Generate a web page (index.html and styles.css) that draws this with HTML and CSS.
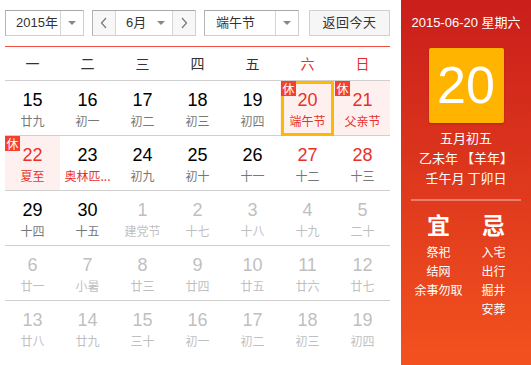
FILE: index.html
```html
<!DOCTYPE html>
<html lang="zh">
<head>
<meta charset="utf-8">
<link rel="stylesheet" href="styles.css">
</head>
<body>
<div class="app">
  <div class="cal">
    <div class="toolbar">
      <div class="sel year"><span class="val">2015年</span><span class="arr"><i></i></span></div>
      <div class="sel month">
        <span class="nav"><svg width="8" height="12" viewBox="0 0 8 12"><polyline points="6,1 1.5,6 6,11" fill="none" stroke="#777" stroke-width="1.2"/></svg></span>
        <span class="val mid">6月<i></i></span>
        <span class="nav"><svg width="8" height="12" viewBox="0 0 8 12"><polyline points="2,1 6.5,6 2,11" fill="none" stroke="#777" stroke-width="1.2"/></svg></span>
      </div>
      <div class="sel fest"><span class="val">端午节</span><span class="arr"><i></i></span></div>
      <div class="btn">返回今天</div>
    </div>
    <div class="week">
      <span>一</span><span>二</span><span>三</span><span>四</span><span>五</span><span class="we">六</span><span class="we">日</span>
    </div>
    <div class="grid">
      <div class="cell"><b>15</b><em>廿九</em></div>
      <div class="cell"><b>16</b><em>初一</em></div>
      <div class="cell"><b>17</b><em>初二</em></div>
      <div class="cell"><b>18</b><em>初三</em></div>
      <div class="cell"><b>19</b><em>初四</em></div>
      <div class="cell hol sel-day"><span class="badge">休</span><b>20</b><em>端午节</em></div>
      <div class="cell hol"><span class="badge">休</span><b>21</b><em>父亲节</em></div>

      <div class="cell hol"><span class="badge">休</span><b>22</b><em>夏至</em></div>
      <div class="cell fest-day"><b>23</b><em>奥林匹...</em></div>
      <div class="cell"><b>24</b><em>初九</em></div>
      <div class="cell"><b>25</b><em>初十</em></div>
      <div class="cell"><b>26</b><em>十一</em></div>
      <div class="cell wkd"><b>27</b><em>十二</em></div>
      <div class="cell wkd"><b>28</b><em>十三</em></div>

      <div class="cell"><b>29</b><em>十四</em></div>
      <div class="cell"><b>30</b><em>十五</em></div>
      <div class="cell other"><b>1</b><em>建党节</em></div>
      <div class="cell other"><b>2</b><em>十七</em></div>
      <div class="cell other"><b>3</b><em>十八</em></div>
      <div class="cell other"><b>4</b><em>十九</em></div>
      <div class="cell other"><b>5</b><em>二十</em></div>

      <div class="cell other"><b>6</b><em>廿一</em></div>
      <div class="cell other"><b>7</b><em>小暑</em></div>
      <div class="cell other"><b>8</b><em>廿三</em></div>
      <div class="cell other"><b>9</b><em>廿四</em></div>
      <div class="cell other"><b>10</b><em>廿五</em></div>
      <div class="cell other"><b>11</b><em>廿六</em></div>
      <div class="cell other"><b>12</b><em>廿七</em></div>

      <div class="cell other last"><b>13</b><em>廿八</em></div>
      <div class="cell other last"><b>14</b><em>廿九</em></div>
      <div class="cell other last"><b>15</b><em>三十</em></div>
      <div class="cell other last"><b>16</b><em>初一</em></div>
      <div class="cell other last"><b>17</b><em>初二</em></div>
      <div class="cell other last"><b>18</b><em>初三</em></div>
      <div class="cell other last"><b>19</b><em>初四</em></div>
    </div>
  </div>
  <div class="side">
    <div class="date">2015-06-20 星期六</div>
    <div class="big">20</div>
    <div class="lunar">
      <div>五月初五</div>
      <div>乙未年 【羊年】</div>
      <div>壬午月 丁卯日</div>
    </div>
    <div class="divider"></div>
    <div class="yj">
      <div class="col">
        <div class="h">宜</div>
        <div class="it">祭祀</div>
        <div class="it">结网</div>
        <div class="it">余事勿取</div>
      </div>
      <div class="col">
        <div class="h">忌</div>
        <div class="it">入宅</div>
        <div class="it">出行</div>
        <div class="it">掘井</div>
        <div class="it">安葬</div>
      </div>
    </div>
  </div>
</div>
</body>
</html>
```

FILE: styles.css
```css
* { box-sizing: border-box; margin: 0; padding: 0; }
html, body { background: #fff; }
body {
  font-family: "Liberation Sans", Arial, "Noto Sans CJK SC", sans-serif;
  color: #333;
  width: 531px;
  height: 365px;
  overflow: hidden;
}
.app { display: flex; height: 365px; }
.cal { width: 401px; padding-left: 5px; }

.toolbar {
  display: flex;
  margin-top: 10px;
  height: 26px;
  font-size: 13px;
}
.sel {
  display: flex;
  border: 1px solid #cfcfcf;
  border-top-color: #a9a9a9;
  border-left-color: #b5b5b5;
  background: #fff;
  height: 26px;
}
.sel .val {
  display: flex;
  align-items: center;
  padding-left: 10px;
  line-height: 24px;
}
.sel .arr {
  display: flex;
  align-items: center;
  justify-content: center;
  border-left: 1px solid #d6d6d6;
}
.sel i, .mid i {
  display: block;
  width: 0; height: 0;
  border-left: 4px solid transparent;
  border-right: 4px solid transparent;
  border-top: 4px solid #888;
}
.year { width: 79px; }
.year .val { width: 55px; }
.year .arr { width: 23px; }
.month { width: 104px; margin-left: 8px; }
.month .nav {
  width: 22px;
  display: flex;
  align-items: center;
  justify-content: center;
  background: #f7f7f7;
}
.month .mid {
  width: 58px;
  border-left: 1px solid #d6d6d6;
  border-right: 1px solid #d6d6d6;
  justify-content: space-between;
  padding-right: 7px;
  padding-left: 10px;
}
.fest { width: 95px; margin-left: 8px; }
.fest .val { width: 71px; padding-left: 11px; }
.fest .arr { width: 23px; }
.btn {
  margin-left: 10px;
  width: 81px;
  height: 26px;
  border: 1px solid #d0d0d0;
  background: #f6f6f6;
  text-align: center;
  line-height: 24px;
  letter-spacing: 0.5px;
}

.week {
  margin-top: 10px;
  width: 385px;
  display: grid;
  grid-template-columns: repeat(7, 55px);
  border-top: 1px solid #ef4f43;
  border-bottom: 1px solid #cfcfcf;
  height: 35px;
  font-size: 14px;
  font-family: "Noto Sans CJK SC", sans-serif;
}
.week span { text-align: center; line-height: 32px; color: #333; }
.week .we { color: #e8302a; }

.grid {
  width: 385px;
  display: grid;
  grid-template-columns: repeat(7, 55px);
  grid-auto-rows: 55px;
}
.cell {
  position: relative;
  text-align: center;
  border-bottom: 1px solid #cfcfcf;
  padding-top: 9px;
}
.cell.last { border-bottom: none; }
.cell b {
  display: block;
  font-weight: normal;
  font-size: 18px;
  line-height: 20px;
  color: #000;
  font-family: "Liberation Sans", Arial, sans-serif;
}
.cell em {
  display: block;
  font-style: normal;
  font-size: 12px;
  line-height: 22px;
  color: #777;
  font-family: "Noto Sans CJK SC", sans-serif;
  white-space: nowrap;
}
.cell.hol { background: #fff0f0; }
.cell.hol b, .cell.hol em, .cell.wkd b, .fest-day em { color: #e8302a; }
.cell.other b, .cell.other em { color: #bfbfbf; }
.badge {
  position: absolute;
  top: 0; left: 0;
  width: 15px; height: 15px;
  background: #f4402f;
  color: #fff;
  font-size: 12px;
  line-height: 15px;
  text-align: center;
  font-family: "Noto Sans CJK SC", sans-serif;
  z-index: 2;
}
.sel-day::after {
  content: "";
  position: absolute;
  top: 0; bottom: -1px; left: 1px; right: 1px;
  border: 3px solid #ffb800;
}
.sel-day .badge { left: 1px; }

.side {
  width: 130px;
  height: 365px;
  background: linear-gradient(#c91e1b, #f3521f);
  color: #fff;
  font-family: "Liberation Sans", Arial, "Noto Sans CJK SC", sans-serif;
  display: flex;
  flex-direction: column;
  align-items: center;
  padding-top: 14px;
}
.date { font-size: 13px; line-height: 18px; white-space: nowrap; }
.big {
  margin-top: 16px;
  width: 75px;
  height: 75px;
  background: #ffb400;
  border-radius: 2px;
  box-shadow: 0 1px 2px rgba(120,0,0,0.35);
  font-size: 52px;
  line-height: 75px;
  text-align: center;
}
.lunar {
  margin-top: 5px;
  font-size: 13px;
  line-height: 20px;
  text-align: center;
  font-family: "Noto Sans CJK SC", sans-serif;
}
.divider {
  margin-top: 11px;
  width: 110px;
  height: 2px;
  background: rgba(255,255,255,0.35);
}
.yj {
  margin-top: 8px;
  width: 110px;
  display: flex;
  font-family: "Noto Sans CJK SC", sans-serif;
}
.col { width: 55px; text-align: center; }
.col .h { font-size: 23px; font-weight: bold; line-height: 30px; margin-bottom: 3px; }
.col .it { font-size: 12px; line-height: 19px; white-space: nowrap; }
```
